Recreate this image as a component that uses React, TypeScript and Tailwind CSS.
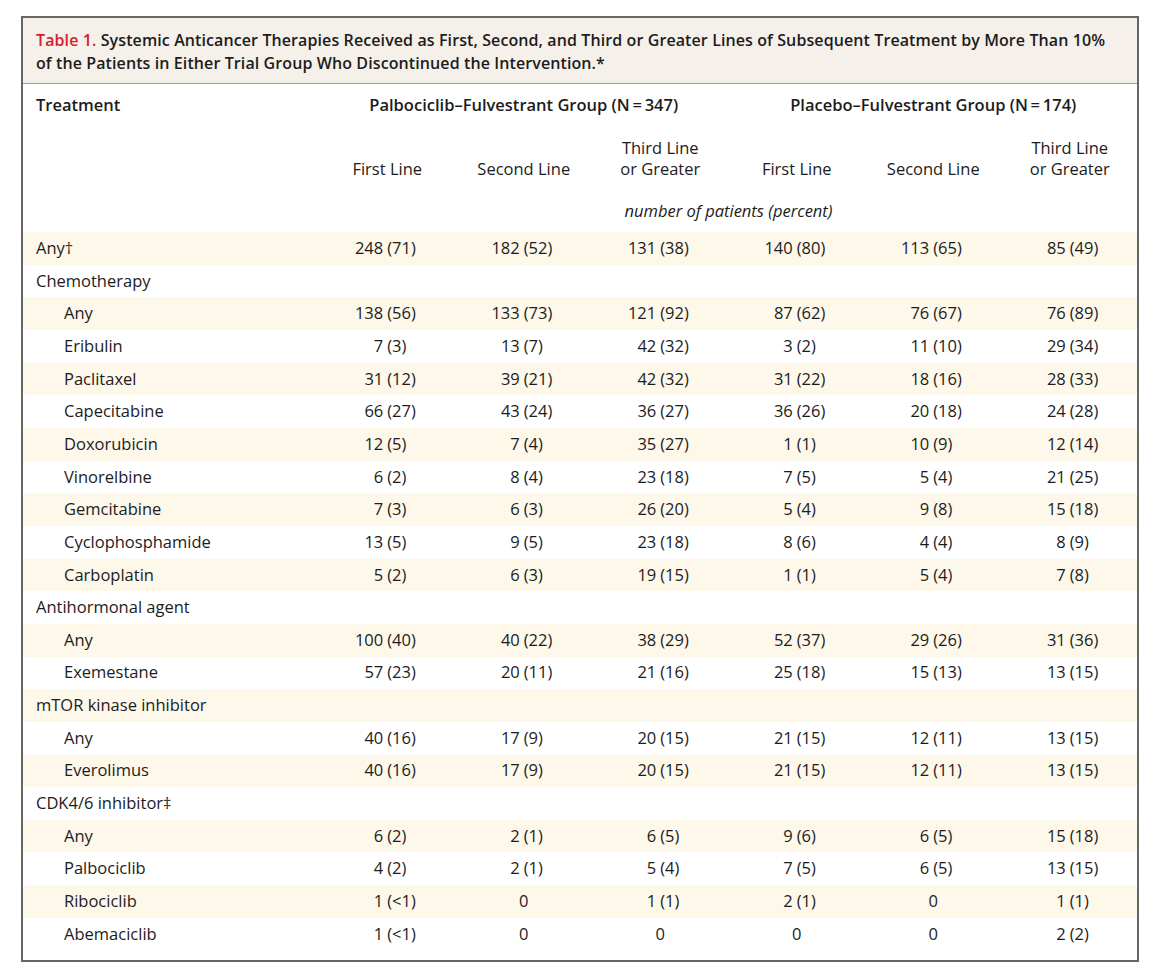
import React from "react";

type Row = {
  label: string;
  mark?: string;
  indent?: boolean;
  values?: string[];
};

const rows: Row[] = [
  { label: "Any", mark: "†", values: ["248 (71)", "182 (52)", "131 (38)", "140 (80)", "113 (65)", "85 (49)"] },
  { label: "Chemotherapy" },
  { label: "Any", indent: true, values: ["138 (56)", "133 (73)", "121 (92)", "87 (62)", "76 (67)", "76 (89)"] },
  { label: "Eribulin", indent: true, values: ["7 (3)", "13 (7)", "42 (32)", "3 (2)", "11 (10)", "29 (34)"] },
  { label: "Paclitaxel", indent: true, values: ["31 (12)", "39 (21)", "42 (32)", "31 (22)", "18 (16)", "28 (33)"] },
  { label: "Capecitabine", indent: true, values: ["66 (27)", "43 (24)", "36 (27)", "36 (26)", "20 (18)", "24 (28)"] },
  { label: "Doxorubicin", indent: true, values: ["12 (5)", "7 (4)", "35 (27)", "1 (1)", "10 (9)", "12 (14)"] },
  { label: "Vinorelbine", indent: true, values: ["6 (2)", "8 (4)", "23 (18)", "7 (5)", "5 (4)", "21 (25)"] },
  { label: "Gemcitabine", indent: true, values: ["7 (3)", "6 (3)", "26 (20)", "5 (4)", "9 (8)", "15 (18)"] },
  { label: "Cyclophosphamide", indent: true, values: ["13 (5)", "9 (5)", "23 (18)", "8 (6)", "4 (4)", "8 (9)"] },
  { label: "Carboplatin", indent: true, values: ["5 (2)", "6 (3)", "19 (15)", "1 (1)", "5 (4)", "7 (8)"] },
  { label: "Antihormonal agent" },
  { label: "Any", indent: true, values: ["100 (40)", "40 (22)", "38 (29)", "52 (37)", "29 (26)", "31 (36)"] },
  { label: "Exemestane", indent: true, values: ["57 (23)", "20 (11)", "21 (16)", "25 (18)", "15 (13)", "13 (15)"] },
  { label: "mTOR kinase inhibitor" },
  { label: "Any", indent: true, values: ["40 (16)", "17 (9)", "20 (15)", "21 (15)", "12 (11)", "13 (15)"] },
  { label: "Everolimus", indent: true, values: ["40 (16)", "17 (9)", "20 (15)", "21 (15)", "12 (11)", "13 (15)"] },
  { label: "CDK4/6 inhibitor", mark: "‡" },
  { label: "Any", indent: true, values: ["6 (2)", "2 (1)", "6 (5)", "9 (6)", "6 (5)", "15 (18)"] },
  { label: "Palbociclib", indent: true, values: ["4 (2)", "2 (1)", "5 (4)", "7 (5)", "6 (5)", "13 (15)"] },
  { label: "Ribociclib", indent: true, values: ["1 (<1)", "0", "1 (1)", "2 (1)", "0", "1 (1)"] },
  { label: "Abemaciclib", indent: true, values: ["1 (<1)", "0", "0", "0", "0", "2 (2)"] },
];

const lines = ["First Line", "Second Line", "Third Line|or Greater"];

// number left of the split, parenthesis right of it, so the "(" lines up
function Value({ v }: { v: string }) {
  const i = v.indexOf(" (");
  if (i < 0) return <div className="text-center">{v}</div>;
  return (
    <div className="flex">
      <span className="w-1/2 text-right pr-[4px]">{v.slice(0, i)}</span>
      <span className="w-1/2 text-left">{v.slice(i + 1)}</span>
    </div>
  );
}

export default function App() {
  return (
    <div className="min-h-screen bg-white pt-4 pl-[21px] text-[#1c1c1c] font-['Open_Sans',sans-serif]">
      <div className="w-[1118px] h-[946px] border-2 border-[#666666] flex flex-col">
        {/* caption */}
        <div className="bg-[#f5f0ea] border-b border-[#9a9a9a] pl-[13px] pr-3 pt-[11px] pb-[8px] text-[16px] leading-[23px] font-semibold tracking-[0.1px] whitespace-nowrap">
          <span className="text-[#d4202c]">Table 1.</span> Systemic Anticancer Therapies Received as First, Second, and Third or Greater Lines of Subsequent Treatment by More Than 10%
          <br />
          of the Patients in Either Trial Group Who Discontinued the Intervention.*
        </div>

        {/* column headers */}
        <div className="text-[16.5px] leading-[24px]">
          <div className="grid grid-cols-[296px_repeat(6,136.5px)] pt-[9px] font-semibold">
            <div className="pl-[13px]">Treatment</div>
            <div className="col-span-3 text-center">Palbociclib–Fulvestrant Group (N{"\u2009=\u2009"}347)</div>
            <div className="col-span-3 text-center">Placebo–Fulvestrant Group (N{"\u2009=\u2009"}174)</div>
          </div>
          <div className="grid grid-cols-[296px_repeat(6,136.5px)] mt-[20px] leading-[21px]">
            <div />
            {[...lines, ...lines].map((l, k) => (
              <div key={k} className="flex flex-col justify-end items-center">
                {l.split("|").map((t) => (
                  <span key={t} className="text-left">{t}</span>
                ))}
              </div>
            ))}
          </div>
          <div className="grid grid-cols-[296px_repeat(6,136.5px)] mt-[20px]">
            <div />
            <div className="col-span-6 text-center italic">number of patients (percent)</div>
          </div>
        </div>

        {/* body */}
        <div className="mt-[9px] text-[16.5px]">
          {rows.map((r, k) => (
            <div
              key={k}
              className={`grid grid-cols-[296px_repeat(6,136.5px)] h-[32.67px] items-center ${k % 2 === 0 ? "bg-[#fdf8ea]" : ""}`}
            >
              <div className={r.indent ? "pl-[41px]" : "pl-[13px]"}>
                {r.label}
                {r.mark && <span className="text-[#2a2a2a]">{r.mark}</span>}
              </div>
              {r.values?.map((v, j) => (
                <Value key={j} v={v} />
              ))}
            </div>
          ))}
        </div>
      </div>
    </div>
  );
}
